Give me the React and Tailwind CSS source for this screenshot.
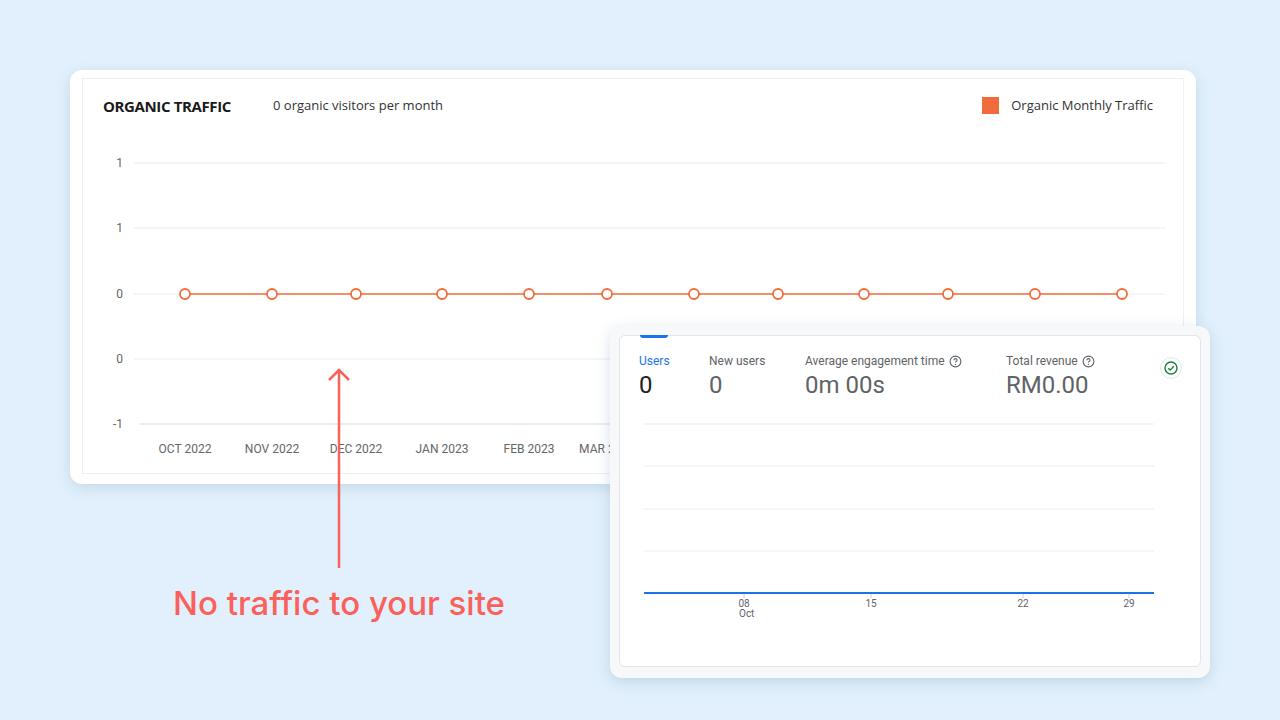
export default function App() {
  const dots = [184,271,355,441,528,606,693,777,863,947,1034,1121];
  const months = [["OCT 2022",184],["NOV 2022",271],["DEC 2022",355],["JAN 2023",441],["FEB 2023",528],["MAR 2023",606],["APR 2023",693],["MAY 2023",777]];
  const ylab = [["1",162],["1",227],["0",293],["0",358],["-1",423]];
  return (
    <div className="relative w-[1280px] h-[720px] bg-[#e1f0fc] overflow-hidden" style={{fontFamily: "Roboto, 'Liberation Sans', sans-serif"}}>
      {/* Card 1 */}
      <div className="absolute left-[70px] top-[70px] w-[1126px] h-[414px] bg-white rounded-[12px] shadow-[0_4px_14px_rgba(120,150,180,0.25)] p-[8px_12px_10px_12px]">
        <div className="relative w-full h-full border border-[#eef0f2]">
          <svg className="absolute left-0 top-0" width="1102" height="396" viewBox="82 78 1102 396">
            {ylab.map(([t,y],i)=>(
              <g key={i}>
                <line x1={t==="-1"?139:133} x2="1164" y1={y} y2={y} stroke={i===4?"#d9d9d9":"#ececec"} strokeWidth="1"/>
                <text x="122" y={y+4} textAnchor="end" fontSize="12" fill="#666" fontFamily="Roboto, sans-serif">{t}</text>
              </g>
            ))}
            <line x1="184" x2="1121" y1="293" y2="293" stroke="#f26b3a" strokeWidth="1.3"/>
            {dots.map(x=>(<circle key={x} cx={x} cy="293" r="5" fill="white" stroke="#f26b3a" strokeWidth="1.8"/>))}
            {months.map(([t,x])=>(<text key={t} x={x} y="452" textAnchor="middle" fontSize="12" fill="#666" fontFamily="Roboto, sans-serif">{t}</text>))}
          </svg>
          <div className="relative flex items-center pl-[20px] pr-[30px] pt-[16px] text-[13px] text-[#333]" style={{fontFamily:"'Open Sans', sans-serif"}}>
            <div className="w-[170px] text-[15px] font-bold text-[#1a1a1a] tracking-tight">ORGANIC TRAFFIC</div>
            <div className="flex-1 -mt-[2px]">0 organic visitors per month</div>
            <div className="flex items-center gap-[12px] -mt-[2px]"><span className="w-[17px] h-[17px] bg-[#f26b3a]"></span>Organic Monthly Traffic</div>
          </div>
        </div>
      </div>

      {/* Arrow + text */}
      <svg className="absolute left-[325px] top-[366px]" width="30" height="204">
        <line x1="14" x2="14" y1="3" y2="202" stroke="#f9615a" strokeWidth="2.5"/>
        <polyline points="4,14 14,4 24,14" fill="none" stroke="#f9615a" strokeWidth="2.5"/>
      </svg>
      <div className="absolute left-[139px] w-[400px] text-center top-[579px] text-[33px] font-medium text-[#f9615a]" style={{fontFamily:"Inter, sans-serif"}}>No traffic to your site</div>

      {/* Card 2 */}
      <div className="absolute left-[610px] top-[326px] w-[600px] h-[352px] bg-[#f6f8fa] rounded-[12px] shadow-[0_4px_14px_rgba(120,150,180,0.3)] p-[9px]">
        <div className="relative w-full h-[332px] bg-white border border-[#e3e6e9] rounded-[6px]">
          <div className="absolute left-[20px] -top-px w-[28px] h-[3px] bg-[#1a73e8] rounded-b"></div>
          <svg className="absolute left-0 top-0" width="582" height="332" viewBox="619 335 582 332">
            {[423,465,508,550].map(y=>(<line key={y} x1="643" x2="1153" y1={y} y2={y} stroke="#ececec"/>))}
            {[743,870,1022,1128].map(x=>(<line key={x} x1={x} x2={x} y1="592" y2="597" stroke="#ccc"/>))}
            <line x1="643" x2="1153" y1="592" y2="592" stroke="#1a73e8" strokeWidth="2"/>
            {[["08",743],["15",870],["22",1022],["29",1128]].map(([t,x])=>(<text key={t} x={x} y="606" textAnchor="middle" fontSize="10" fill="#5f6368" fontFamily="Roboto, sans-serif">{t}</text>))}
            <text x="738" y="616" fontSize="10" fill="#5f6368" fontFamily="Roboto, sans-serif">Oct</text>
          </svg>
          <div className="relative flex items-start pl-[19px] pr-[18px] pt-[16px] text-[#5f6368]">
            <div className="w-[70px]"><div className="text-[12px] text-[#1a73e8]">Users</div><div className="text-[24px] text-[#202124] leading-[30px]">0</div></div>
            <div className="w-[96px]"><div className="text-[12px]">New users</div><div className="text-[24px] leading-[30px]">0</div></div>
            <div className="w-[201px]"><div className="text-[12px] flex items-center gap-1">Average engagement time <Q/></div><div className="text-[24px] leading-[30px]">0m 00s</div></div>
            <div className="flex-1"><div className="text-[12px] flex items-center gap-1">Total revenue <Q/></div><div className="text-[24px] leading-[30px]">RM0.00</div></div>
            <div className="mt-[5px] w-[22px] h-[22px] rounded-full border border-[#e3e6e9] flex items-center justify-center">
              <svg width="14" height="14" viewBox="0 0 14 14"><circle cx="7" cy="7" r="6" fill="none" stroke="#188038" strokeWidth="1.4"/><polyline points="4.2,7.2 6.2,9.1 9.8,5.2" fill="none" stroke="#188038" strokeWidth="1.4"/></svg>
            </div>
          </div>
        </div>
      </div>
    </div>
  );
}
function Q(){return(<svg width="13" height="13" viewBox="0 0 14 14"><circle cx="7" cy="7" r="5.8" fill="none" stroke="#5f6368" strokeWidth="1.2"/><path d="M5.3 5.6a1.7 1.7 0 1 1 2.4 1.5c-.5.3-.7.6-.7 1.1" fill="none" stroke="#5f6368" strokeWidth="1.2"/><circle cx="7" cy="10" r=".7" fill="#5f6368"/></svg>);}
